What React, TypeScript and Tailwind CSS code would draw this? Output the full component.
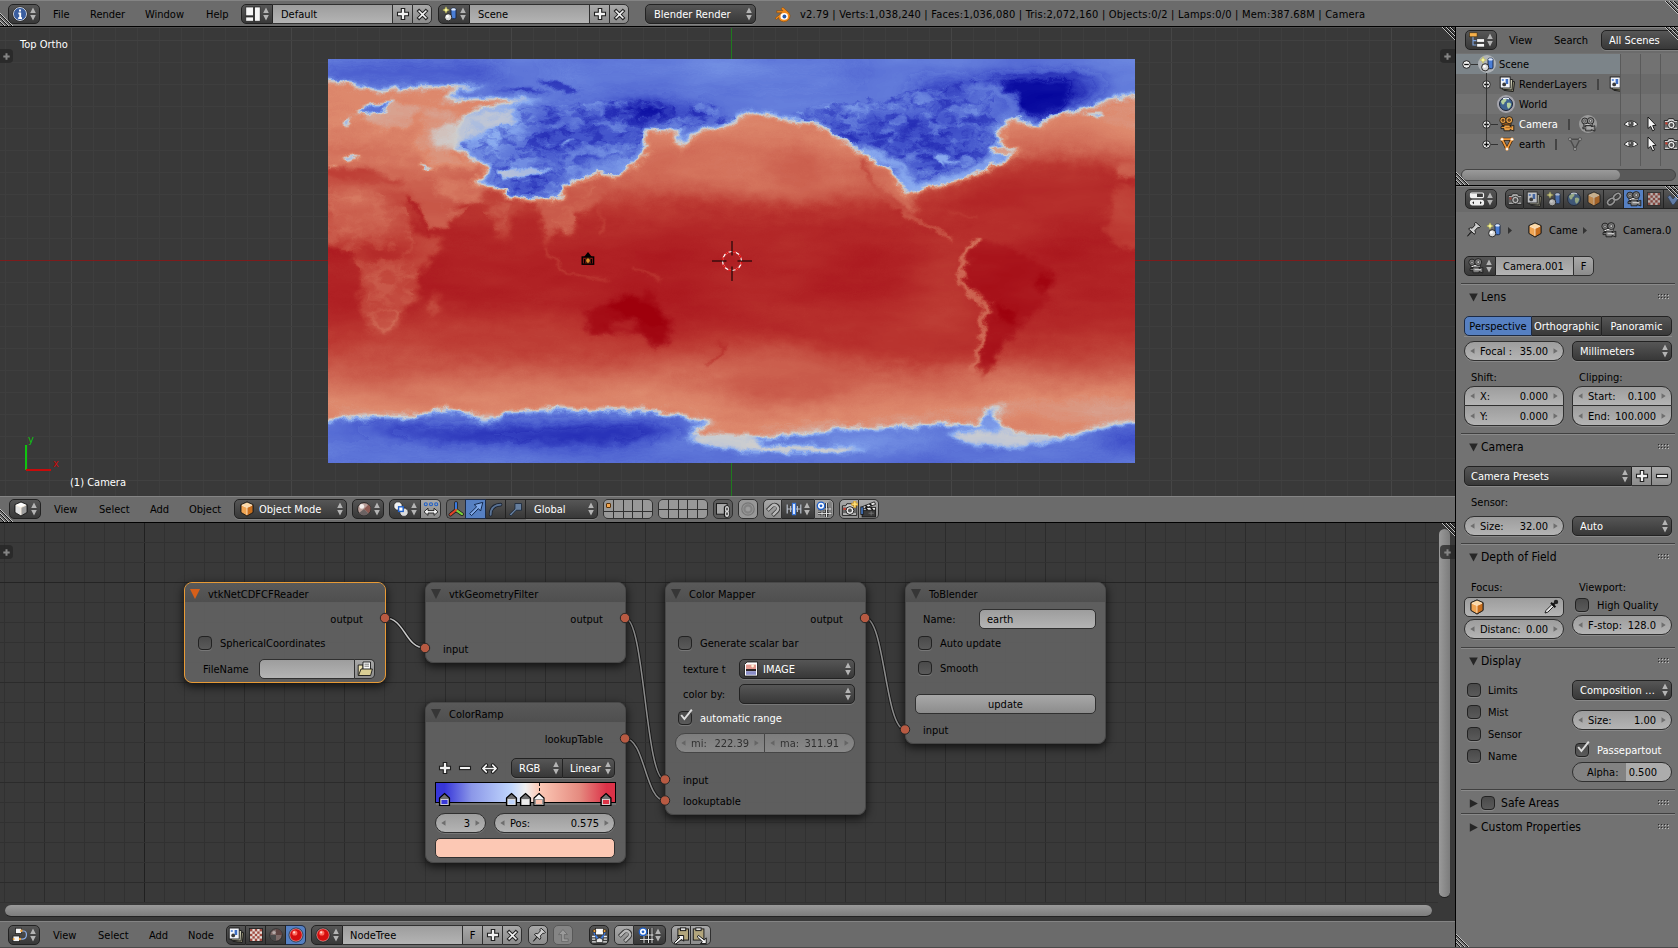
import React from "react";

const DARK = "bg-linear-to-b from-[#565656] to-[#383838] border-[#222]";
const LIGHT = "bg-linear-to-b from-[#9d9d9d] to-[#b4b4b4] border-[#303030]";
const TOOL = "bg-linear-to-b from-[#a8a8a8] to-[#8c8c8c] border-[#303030]";
const EMBOSS = "shadow-[0_1px_0_rgba(255,255,255,0.16)]";

/* ---------- icons, all on a 16x16 canvas ---------- */

const Cube = ({ a, b, c }: { a: string; b: string; c: string }) => (
  <g stroke="#1d1d1d" strokeWidth="0.9" strokeLinejoin="round">
    <path d="M8 1 L14 3.6 V11.4 L8 15 L2 11.4 V3.6Z" fill={b} />
    <path d="M2 3.6 L8 6.2 V15 L2 11.4Z" fill={b} stroke="none" />
    <path d="M14 3.6 L8 6.2 V15 L14 11.4Z" fill={c} stroke="none" />
    <path d="M8 1 L14 3.6 L8 6.2 L2 3.6Z" fill={a} stroke="none" />
    <path d="M8 1 L14 3.6 V11.4 L8 15 L2 11.4 V3.6Z" fill="none" />
    <path d="M3 4.3 L8 6.5 L13 4.3 M8 6.5 V13.8" fill="none" stroke="#fff3e0" strokeWidth="0.8" />
  </g>
);

const MovieCam = ({ f, d }: { f: string; d: string }) => (
  <g stroke="#1d1d1d" strokeWidth="0.9" strokeLinejoin="round">
    <rect x="3" y="6.5" width="9" height="3" fill={d} />
    <circle cx="4" cy="4.3" r="3.2" fill={f} />
    <circle cx="10.2" cy="4.1" r="3.5" fill={f} />
    <circle cx="4" cy="4.3" r="1.1" fill={d} strokeWidth="0.6" />
    <circle cx="10.2" cy="4.1" r="1.3" fill={d} strokeWidth="0.6" />
    <path d="M5 9 H11 V10.5 L14.8 9.3 V15 L11 13.6 V14.8 H5 V12.6 H2 V10.6 H5Z" fill={f} />
    <path d="M6.5 11.7 H13" stroke={d} fill="none" />
  </g>
);

const SceneShapes = () => (
  <g>
    <rect x="9" y="2.2" width="5" height="10.5" rx="1.5" fill="#4a7ed6" stroke="#14233f" strokeWidth="0.9" />
    <ellipse cx="11.5" cy="3.4" rx="2.3" ry="1.2" fill="#dfeaff" />
    <circle cx="6.2" cy="11.3" r="3.6" fill="#d8d8d8" stroke="#1a1a1a" strokeWidth="0.9" />
    <circle cx="5.4" cy="10.4" r="1.4" fill="#fff" />
    <path d="M4 0.8 L5 3 L7.2 4 L5 5 L4 7.2 L3 5 L0.8 4 L3 3Z" fill="#f7f49a" stroke="#b5b04a" strokeWidth="0.5" />
  </g>
);

const PhotoCam = () => (
  <g strokeLinejoin="round">
    <path d="M1.3 4.5 H4.5 L5.5 2.6 H10.5 L11.5 4.5 H14.8 V13.5 H1.3Z" fill="#cfcfcf" stroke="#1a1a1a" strokeWidth="0.9" />
    <rect x="1.8" y="6" width="12.5" height="5.6" fill="#6a6a6a" />
    <circle cx="8.4" cy="9" r="3.7" fill="#f0f0f0" stroke="#1a1a1a" strokeWidth="0.9" />
    <circle cx="8.4" cy="9" r="1.9" fill="#555" />
    <rect x="2.4" y="6.4" width="2" height="2" fill="#d03a2a" />
  </g>
);

const Globe = () => (
  <g>
    <circle cx="8" cy="8" r="6.5" fill="#3f628f" stroke="#1b2436" strokeWidth="1" />
    <path d="M3 5 Q6 2 8.5 3 Q9 5 6.5 6.5 Q6.5 9 4.5 8.5 Q3 7.5 3 5Z M9 7 Q12 5.5 13.3 8 Q12.5 12 10 12.8 Q8.3 10 9 7Z" fill="#b5cf9c" />
    <path d="M5 2.8 Q8 1.4 11 2.9" stroke="#eef4ff" strokeWidth="1.2" fill="none" />
  </g>
);

const Layers = () => (
  <g stroke="#1a1a1a" strokeWidth="0.9">
    <rect x="5.5" y="5" width="9.5" height="10" fill="#8d8a70" transform="rotate(8 10 10)" />
    <rect x="3.6" y="3.2" width="9.8" height="10.4" fill="#c9c9b0" transform="rotate(4 8 8)" />
    <rect x="1.2" y="1" width="10" height="11" fill="#f2f5fb" />
    <rect x="6.6" y="3" width="2.6" height="5" fill="#3f6fc4" stroke="none" />
    <circle cx="5.2" cy="8.4" r="1.9" fill="#3a3a3a" stroke="none" />
    <rect x="2.8" y="3" width="2" height="2" fill="#6a93dc" stroke="none" />
  </g>
);

const Checker = ({ a }: { a: string }) => (
  <g>
    <rect x="1.5" y="1.5" width="13" height="13" fill="#e6dcd8" stroke="#222" strokeWidth="0.9" />
    {[0, 1, 2, 3, 4].map((r) =>
      [0, 1, 2, 3, 4].map((c) =>
        (r + c) % 2 === 0 ? <rect key={r * 5 + c} x={2 + c * 2.4} y={2 + r * 2.4} width="2.4" height="2.4" fill={a} /> : null
      )
    )}
  </g>
);

const Magnet = () => (
  <g fill="none" strokeLinecap="butt">
    <path d="M2.5 9 L7.5 4 A3.9 3.9 0 0 1 13 9.6 L8 14.4" stroke="#333" strokeWidth="4.2" />
    <path d="M3 8.6 L7.6 4.1 A3.8 3.8 0 0 1 12.9 9.5 L8.4 14" stroke="#b9b9b9" strokeWidth="2.6" />
  </g>
);

const Clip = () => (
  <g stroke="#1a1a1a" strokeWidth="0.9">
    <rect x="4.6" y="1.8" width="10" height="10.5" fill="#b3a67c" />
    <rect x="7" y="0.8" width="5" height="2.6" fill="#e0e0e0" />
  </g>
);

const Plus = () => (
  <path d="M6.3 2.5 H9.7 V6.3 H13.5 V9.7 H9.7 V13.5 H6.3 V9.7 H2.5 V6.3 H6.3Z" fill="#f2f2f2" stroke="#1e1e1e" strokeWidth="1.1" />
);

const ICONS: Record<string, React.ReactNode> = {
  info: (
    <g>
      <circle cx="8" cy="8" r="6.6" fill="#3a5e9f" stroke="#e6ebf5" strokeWidth="1" />
      <circle cx="8" cy="8" r="7.2" fill="none" stroke="#1a1a1a" strokeWidth="0.5" />
      <path d="M8 3.4 v2.2 M6.4 7.4 H8.2 V12 M6.2 12.1 H10" stroke="#fff" strokeWidth="1.9" fill="none" />
    </g>
  ),
  layout: (
    <g fill="#f6f6f6" stroke="#1c1c1c" strokeWidth="0.7">
      <rect x="0.8" y="1" width="7.6" height="8.8" />
      <rect x="0.8" y="11" width="7.6" height="4.2" />
      <rect x="9.6" y="1" width="5.6" height="14.2" />
    </g>
  ),
  scene: <SceneShapes />,
  outliner: (
    <g>
      <path d="M4 4 V13 H8 M4 8.6 H8" stroke="#7fa3dd" strokeWidth="1.1" fill="none" />
      <rect x="0.5" y="0.8" width="7.6" height="4" fill="#f6b04a" stroke="#3a2a10" strokeWidth="0.6" />
      <rect x="7.8" y="6.8" width="7.6" height="3.4" fill="#f8f8f8" stroke="#222" strokeWidth="0.6" />
      <rect x="7.8" y="11.6" width="7.6" height="3.4" fill="#f8f8f8" stroke="#222" strokeWidth="0.6" />
    </g>
  ),
  props: (
    <g stroke="#f0f0f0" strokeWidth="1.2">
      <rect x="1.5" y="2" width="13" height="4.6" rx="1.2" fill="#3a3a3a" />
      <rect x="2" y="2.5" width="6" height="3.6" fill="#f0f0f0" stroke="none" />
      <rect x="1.5" y="9.4" width="13" height="4.6" rx="2" fill="#f0f0f0" />
      <path d="M5 10.2 L3.2 11.7 L5 13.2Z M11 10.2 L12.8 11.7 L11 13.2Z" fill="#222" stroke="none" />
    </g>
  ),
  layers: <Layers />,
  globe: <Globe />,
  camOrange: <MovieCam f="#eda245" d="#9c5a17" />,
  camGrey: <MovieCam f="#8f8f8f" d="#d0d0d0" />,
  camDark: <MovieCam f="#7a7a7a" d="#e8e8e8" />,
  mesh: (
    <g>
      <path d="M3 3.2 H13 L8 13Z" fill="none" stroke="#3a2208" strokeWidth="3" strokeLinejoin="round" />
      <path d="M3 3.2 H13 L8 13Z" fill="none" stroke="#f39a3c" strokeWidth="1.7" strokeLinejoin="round" />
      <g fill="#fff" stroke="#f39a3c" strokeWidth="0.5"><circle cx="3" cy="3.2" r="1.5" /><circle cx="13" cy="3.2" r="1.5" /><circle cx="8" cy="13" r="1.5" /></g>
    </g>
  ),
  meshGrey: (
    <g>
      <path d="M3 3.2 H13 L8 13Z" fill="none" stroke="#4a4a4a" strokeWidth="1.4" />
      <g fill="#9a9a9a" stroke="#4a4a4a" strokeWidth="0.8"><circle cx="3" cy="3.2" r="1.6" /><circle cx="13" cy="3.2" r="1.6" /><circle cx="8" cy="13" r="1.6" /></g>
    </g>
  ),
  eye: (
    <g>
      <path d="M1 8.3 Q8 1.2 15 8.3 Q8 13.4 1 8.3Z" fill="#f6f6f6" stroke="#222" strokeWidth="0.9" />
      <circle cx="8" cy="7.8" r="2.7" fill="#4c4c4c" />
      <circle cx="7.2" cy="7" r="0.8" fill="#ddd" />
    </g>
  ),
  cursor: <path d="M5 1 L5 12.5 L7.6 10.3 L9.6 14.8 L11.6 13.9 L9.7 9.6 L13 9.3Z" fill="#f4f4f4" stroke="#1a1a1a" strokeWidth="1" />,
  photo: <PhotoCam />,
  photoPlus: (
    <g>
      <PhotoCam />
      <path d="M12 0 h2 v2 h2 v2 h-2 v2 h-2 v-2 h-2 v-2 h2Z" fill="#ffe27a" stroke="#c98c10" strokeWidth="0.6" />
    </g>
  ),
  clapper: (
    <g stroke="#111" strokeWidth="0.8">
      <rect x="2" y="8" width="12.5" height="7" fill="#3a3a3a" />
      <rect x="2" y="6" width="12.5" height="2.6" fill="#f0f0f0" />
      <path d="M2 5.4 L13.6 0.8 L14.6 3.2 L3 7.4Z" fill="#f0f0f0" />
      <path d="M5 4.2 L7 5.8 M9 2.7 L11 4.3 M5 6 L7 8.5 M10 6 L12 8.5" stroke="#111" strokeWidth="1.5" />
      <rect x="0.8" y="5.6" width="2.2" height="7" fill="#4b83d8" />
      <path d="M8 11.5 h5 M10.5 9.6 v4" stroke="#777" />
    </g>
  ),
  cube: <Cube a="#fbd9a8" b="#f0a553" c="#c96f1d" />,
  cubeWhite: <Cube a="#ffffff" b="#e2e2e2" c="#9c9c9c" />,
  link: (
    <g fill="none" strokeLinecap="round">
      <g stroke="#2a2a2a" strokeWidth="3.2"><ellipse cx="5" cy="10.6" rx="3.8" ry="2.6" transform="rotate(-40 5 10.6)" /><ellipse cx="11" cy="5.6" rx="3.8" ry="2.6" transform="rotate(-40 11 5.6)" /></g>
      <g stroke="#b8b8b8" strokeWidth="1.6"><ellipse cx="5" cy="10.6" rx="3.8" ry="2.6" transform="rotate(-40 5 10.6)" /><ellipse cx="11" cy="5.6" rx="3.8" ry="2.6" transform="rotate(-40 11 5.6)" /></g>
    </g>
  ),
  checker: <Checker a="#a0483e" />,
  wrench: <path d="M1.5 6 L4 4 L7 8 L13 1.6 L15.4 3.4 L8 13.6 Q6.8 14.6 5.8 13Z" fill="#6f93cf" stroke="#24395c" strokeWidth="0.8" />,
  pin: (
    <g transform="rotate(42 8 8)" stroke="#1a1a1a" strokeWidth="0.9">
      <path d="M7.6 10 L8 16.2 L8.4 10Z" fill="#eee" />
      <path d="M4 10.2 Q4 7.6 6.2 7.2 V3.2 L4.8 2 V0.4 H11.2 V2 L9.8 3.2 V7.2 Q12 7.6 12 10.2Z" fill="#cfcfcf" />
    </g>
  ),
  dropper: (
    <g>
      <path d="M2 14 L3 11.4 L9 5.4 L10.8 7.2 L4.8 13.2Z" fill="#e8e8e8" stroke="#111" strokeWidth="0.9" />
      <path d="M8 3.8 L12.4 8.2 M10.2 5.8 L12.8 3" stroke="#111" strokeWidth="2" />
      <circle cx="13" cy="2.9" r="2.2" fill="#222" />
    </g>
  ),
  folder: (
    <g stroke="#1a1a1a" strokeWidth="0.9" strokeLinejoin="round">
      <path d="M1.2 4 H6 V14.5 H1.2Z" fill="#eadfae" />
      <rect x="6" y="1" width="7.5" height="8" fill="#fafafa" />
      <path d="M7.5 3.2 H12 M7.5 5.2 H12" stroke="#555" strokeWidth="0.8" />
      <path d="M1.5 14.5 L4 8 H15.4 L13.6 14.5Z" fill="#d9ce94" />
    </g>
  ),
  image: (
    <g>
      <path d="M4 1 H14.5 V15 H1.5 V3.5Z" fill="#fff" stroke="#111" strokeWidth="0.8" />
      <rect x="3" y="3.6" width="10" height="5" fill="#e39a90" />
      <rect x="3" y="8" width="10" height="2.2" fill="#2b2222" />
      <rect x="3" y="10.2" width="10" height="3.6" fill="#8b8fc9" />
      <circle cx="9.6" cy="5" r="1.4" fill="#fff2d8" />
    </g>
  ),
  ballRed: (
    <g>
      <circle cx="8" cy="8" r="6.4" fill="#d40f0f" stroke="#f0d0d0" strokeWidth="0.8" />
      <circle cx="8" cy="8" r="7" fill="none" stroke="#1a1a1a" strokeWidth="0.7" />
      <circle cx="6.8" cy="6" r="2.6" fill="#ff6a5c" />
      <circle cx="6.2" cy="5.4" r="1.1" fill="#ffd8d0" />
    </g>
  ),
  ballMix: (
    <g>
      <circle cx="8" cy="8" r="6.4" fill="#b9a09a" stroke="#1a1a1a" strokeWidth="0.9" />
      <path d="M8 8 L12.6 3.4 A6.2 6.2 0 0 1 12.6 12.4Z" fill="#8d5a52" />
      <path d="M8 8 L12.6 12.4 A6.2 6.2 0 0 1 3 12Z" fill="#6b6262" />
      <circle cx="5.8" cy="5.4" r="2.4" fill="#f4eeec" />
    </g>
  ),
  ballDark: (
    <g>
      <circle cx="8" cy="8" r="6.2" fill="#7d6a68" stroke="#222" strokeWidth="0.8" />
      <path d="M8 8 V2 A6 6 0 0 1 14 8Z" fill="#5f4543" />
      <path d="M8 8 V14 A6 6 0 0 1 2 8Z" fill="#4b4b4b" />
      <circle cx="6" cy="5.6" r="1.7" fill="#b5aaa8" />
    </g>
  ),
  pivot: (
    <g stroke="#222" strokeWidth="0.8">
      <circle cx="5" cy="5" r="4.2" fill="#f0f0f0" />
      <circle cx="11" cy="11.2" r="4.2" fill="#dcdcdc" />
      <rect x="5.6" y="5.8" width="4.6" height="4.6" fill="#fff" stroke="#1f5fc8" strokeWidth="1.4" />
    </g>
  ),
  centers: (
    <g>
      <g fill="none" stroke="#2060c8" strokeWidth="1.1"><circle cx="2.8" cy="3.2" r="1.5" /><circle cx="8" cy="3.2" r="1.5" /><circle cx="13.2" cy="3.2" r="1.5" /></g>
      <path d="M1 10.8 L5 7.2 V9.6 H11 V7.2 L15 10.8 L11 14.4 V12 H5 V14.4Z" fill="#f2f2f2" stroke="#1a1a1a" strokeWidth="0.9" />
    </g>
  ),
  axes: (
    <g fill="none" strokeLinecap="round">
      <g stroke="#1a1a1a" strokeWidth="3.6"><path d="M8 9 V2 M8 9 L2.4 13.6 M8 9 L14 13.2" /></g>
      <path d="M8 9 V2" stroke="#3b7be0" strokeWidth="2.2" />
      <path d="M8 9 L14 13.2" stroke="#7bd23a" strokeWidth="2.2" />
      <path d="M8 9 L2.4 13.6" stroke="#e0442a" strokeWidth="2.2" />
    </g>
  ),
  arrow: <path d="M1.6 12.6 L8.6 5.8 L6.2 3.6 L14.8 1.4 L12.6 10 L10.4 7.6 L3.6 14.6Z" fill="#7ea8e8" stroke="#13294f" strokeWidth="1" />,
  arc: (
    <g fill="none" strokeLinecap="round">
      <path d="M2.8 13.6 Q2.6 3.6 13.4 2.8" stroke="#1a2230" strokeWidth="3.8" />
      <path d="M2.8 13.6 Q2.6 3.6 13.4 2.8" stroke="#5b7496" strokeWidth="2" />
    </g>
  ),
  scaleTool: <path d="M1.4 13.2 L7.4 7.4 V1.6 H14.4 V8.8 H8.8 L3.2 14.8Z" fill="#667f9f" stroke="#1b2738" strokeWidth="0.9" />,
  lockLayers: (
    <g>
      <rect x="1.4" y="2.4" width="10" height="10" fill="#a8a8a8" stroke="#1a1a1a" strokeWidth="0.9" />
      <g fill="none"><path d="M11 6.6 v3 M11 10 v3" stroke="#1a1a1a" strokeWidth="5.4" strokeLinecap="round" /><path d="M11.3 6.6 v2.4 M11.3 10.8 v2.4" stroke="#dcdcdc" strokeWidth="3.6" strokeLinecap="round" /><path d="M11.3 6.8 v1.4 M11.3 11.2 v1.6" stroke="#333" strokeWidth="1.4" strokeLinecap="round" /></g>
    </g>
  ),
  prop: (
    <g fill="none">
      <circle cx="8" cy="8" r="6.2" stroke="#777" strokeWidth="1.2" />
      <circle cx="8" cy="8" r="3.6" stroke="#828282" strokeWidth="2.2" />
      <circle cx="8" cy="8" r="1.8" fill="#9d9d9d" />
    </g>
  ),
  magnet: <Magnet />,
  increments: (
    <g>
      <path d="M0.8 8 H15.2 M1.2 3.6 V12.4 M4.6 5 V11 M11.4 5 V11 M14.8 3.6 V12.4" stroke="#b9c0cc" strokeWidth="1.2" />
      <rect x="6.5" y="2.4" width="3" height="11.2" fill="#e6efff" stroke="#3b78dd" strokeWidth="1.2" />
    </g>
  ),
  gridDot: (
    <g>
      <path d="M2 8 H15.5 M2 12.4 H15.5 M6 8 V16 M10.5 2 V16 M14 0.8 V16" stroke="#1a1a1a" strokeWidth="2.4" />
      <path d="M2 8 H15.5 M2 12.4 H15.5 M6 8 V16 M10.5 2 V16 M14 0.8 V16" stroke="#e6e6e6" strokeWidth="1" />
      <circle cx="5" cy="4.8" r="3.7" fill="#fff" stroke="#2060c8" strokeWidth="1.4" />
      <circle cx="5" cy="4.8" r="1.4" fill="#2060c8" />
    </g>
  ),
  nodeEditor: (
    <g>
      <path d="M8 4 H12 Q14.6 4.4 14.4 8 Q14.4 12.6 9 12" stroke="#8fb0e8" strokeWidth="1.2" fill="none" />
      <rect x="3.5" y="1.2" width="6" height="5.4" fill="#f4f4f4" stroke="#222" strokeWidth="0.8" />
      <rect x="1" y="9" width="6.6" height="5.6" fill="#f4f4f4" stroke="#222" strokeWidth="0.8" />
      <circle cx="9.4" cy="3.8" r="1.2" fill="#f2a33a" />
      <circle cx="8" cy="12" r="1.2" fill="#f2a33a" />
      <circle cx="1.6" cy="12" r="1" fill="#f2a33a" />
    </g>
  ),
  parent: <path d="M6 14.5 V7 H2.6 L7.4 1.6 L12.2 7 H8.8 V11.6 H13 V14.5Z" fill="#9b9b9b" stroke="#6c6c6c" strokeWidth="1" />,
  backdrop: (
    <g stroke="#111" strokeWidth="0.6">
      <path d="M1 9 h3 M12 9 h3 M1 11.4 h3 M12 11.4 h3 M1 14 h14" stroke="#e8e8e8" strokeWidth="1.3" />
      <path d="M2.6 4.6 L5.6 10 L8 12.4 L10.4 10 L13.4 4.6" stroke="#3b78dd" strokeWidth="1.8" fill="none" />
      <path d="M5 12 Q8 8.6 11 12 V14.6 H5Z" fill="#e4e4e4" />
      <rect x="4.2" y="1.2" width="7.6" height="6.2" fill="#fafafa" />
      <circle cx="3.2" cy="3.8" r="1.4" fill="#f2a33a" />
      <circle cx="12.8" cy="3.8" r="1.4" fill="#f2a33a" />
    </g>
  ),
  copyNodes: (
    <g><Clip /><path d="M1 15 L6.4 9.6 L4.6 8 H10 V13.4 L8.2 11.6 L2.6 16Z" fill="#f2f2f2" stroke="#111" strokeWidth="0.9" /></g>
  ),
  pasteNodes: (
    <g><g transform="translate(-3.4 0)"><Clip /></g><path d="M6 7.8 L11.6 12.2 L13.4 10.2 V15.6 H8 L9.8 13.8 L5 9.4Z" fill="#f2f2f2" stroke="#111" strokeWidth="0.9" /></g>
  ),
  plus: <Plus />,
  minus: <rect x="2.5" y="6.4" width="11" height="3.2" fill="#f2f2f2" stroke="#1e1e1e" strokeWidth="1.1" />,
  cross: <g transform="rotate(45 8 8)"><path d="M6.6 1.5 H9.4 V6.6 H14.5 V9.4 H9.4 V14.5 H6.6 V9.4 H1.5 V6.6 H6.6Z" fill="#f2f2f2" stroke="#1e1e1e" strokeWidth="1.1" /></g>,
  flip: (
    <g fill="none" strokeLinecap="round" strokeLinejoin="round">
      <path d="M2 8 H14 M5 4.8 L1.8 8 L5 11.2 M11 4.8 L14.2 8 L11 11.2" stroke="#1a1a1a" strokeWidth="3.4" />
      <path d="M2 8 H14 M5 4.8 L1.8 8 L5 11.2 M11 4.8 L14.2 8 L11 11.2" stroke="#f4f4f4" strokeWidth="1.6" />
    </g>
  ),
  blender: (
    <g>
      <path d="M1 11.6 L7.4 6.4 H2.6 V4.4 H8.4 L6.6 2.6 L8.4 1.2 L14 6.4 Q16 8.8 14.6 11.8 Q12.6 15 9 14.8 Q4.8 14.4 4.4 10.8 L2.4 12.6Z" fill="#f08a1c" stroke="#7a4208" strokeWidth="0.5" />
      <ellipse cx="9.6" cy="9.8" rx="3.5" ry="3.1" fill="#fff" />
      <circle cx="9.8" cy="9.9" r="1.8" fill="#2358a8" />
    </g>
  ),
};

const Icon = ({ n, s = 16, className = "" }: { n: string; s?: number; className?: string }) => (
  <svg width={s} height={s} viewBox="0 0 16 16" className={"shrink-0 " + className}>{ICONS[n]}</svg>
);

const UpDown = () => (
  <svg width="6" height="14" viewBox="0 0 6 14" className="shrink-0">
    <path d="M3 0.5 L5.8 6 H0.2Z M3 13.5 L0.2 8 H5.8Z" fill="#b4b4b4" />
  </svg>
);

/* ---------- widgets ---------- */

const IconMenu = ({ n, className = "" }: { n: string; className?: string }) => (
  <div className={`flex h-5 w-8 shrink-0 items-center justify-between rounded-[5px] border pr-[3px] pl-[3px] ${DARK} ${className}`}>
    <Icon n={n} s={16} />
    <UpDown />
  </div>
);

const Menu = ({ text, icon, className = "" }: { text: string; icon?: string; className?: string }) => (
  <div className={`flex h-5 shrink-0 items-center border pr-[3px] text-white ${DARK} ${EMBOSS} ${className}`}>
    {icon && <Icon n={icon} s={16} className="mr-[4px]" />}
    <span className="flex-1 overflow-hidden pt-[2px] leading-4 whitespace-nowrap">{text}</span>
    <UpDown />
  </div>
);

const Btn = ({ n, className = "", s = 16 }: { n: string; className?: string; s?: number }) => (
  <div className={`flex h-5 shrink-0 items-center justify-center border ${className}`}>
    <Icon n={n} s={s} />
  </div>
);

const Tri = ({ d }: { d: "l" | "r" }) => (
  <svg width="5" height="6" viewBox="0 0 5 6" className="shrink-0">
    <path d={d === "l" ? "M4.5 0.2 V5.8 L0.3 3Z" : "M0.5 0.2 V5.8 L4.7 3Z"} fill="#6e6e6e" />
  </svg>
);

const Num = ({ label, value, className = "" }: { label?: string; value: string; className?: string }) => (
  <div className={`flex h-5 items-center border px-[5px] ${LIGHT} ${className}`}>
    <Tri d="l" />
    <span className="flex flex-1 justify-between pt-[2px] pr-[5px] pl-[5px] leading-4 whitespace-nowrap">
      <span>{label}</span>
      <span>{value}</span>
    </span>
    <Tri d="r" />
  </div>
);

const Check = ({ on }: { on?: boolean }) => (
  <span className={`flex size-[14px] shrink-0 rounded-[4px] border border-[#222] bg-linear-to-b from-[#4a4a4a] to-[#5a5a5a] ${EMBOSS}`}>
    {on && (
      <svg width="16" height="14" viewBox="0 0 16 14" className="-mt-1 shrink-0 overflow-visible">
        <path d="M2.2 7 L5.4 11 L12.8 1.6" fill="none" stroke="#dcdcdc" strokeWidth="2" />
      </svg>
    )}
  </span>
);

const Hatch = ({ flip = false, className }: { flip?: boolean; className: string }) => (
  <svg width="13" height="13" viewBox="0 0 13 13" className={"absolute " + className}>
    {[0, 4, 8].map((o) => (
      <g key={o} strokeWidth="1">
        <path d={flip ? `M0 ${o + 1} L${12 - o} 13` : `M${o + 1} 0 L13 ${12 - o}`} stroke="#141414" />
        <path d={flip ? `M0 ${o} L${13 - o} 13` : `M${o} 0 L13 ${13 - o}`} stroke="#c4c4c4" />
      </g>
    ))}
  </svg>
);

const PlusTab = ({ className }: { className: string }) => (
  <div className={`absolute flex h-[14px] items-center justify-center bg-[#262626]/75 ${className}`}>
    <svg width="7" height="7" viewBox="0 0 7 7"><path d="M3.5 0.3 V6.7 M0.3 3.5 H6.7" stroke="#858585" strokeWidth="2" /></svg>
  </div>
);

const BAR = "relative flex shrink-0 items-center border-t border-[#848484] bg-[#6b6b6b] [&>span]:shrink-0 [&>span]:pt-[2px]";
const FIELD = "flex h-5 shrink-0 items-center pt-[2px]";

/* ---------- info header ---------- */

const DataBlock = ({ icon, text }: { icon: string; text: string }) => (
  <div className="flex w-[191px] shrink-0">
    <IconMenu n={icon} className="rounded-r-none" />
    <div className={`w-[119px] border-y pl-2 ${FIELD} ${LIGHT}`}>{text}</div>
    <Btn n="plus" className={`w-5 border-r-0 ${TOOL}`} />
    <Btn n="cross" className={`w-5 rounded-r-[5px] ${TOOL}`} s={15} />
  </div>
);

const InfoBar = () => (
  <header className={`${BAR} h-[26px] pt-px pl-2`}>
    <Hatch flip className="bottom-0 left-0" />
    <IconMenu n="info" />
    <span className="ml-[13px] w-[37px]">File</span>
    <span className="w-[55px]">Render</span>
    <span className="w-[61px]">Window</span>
    <span className="w-[35px]">Help</span>
    <DataBlock icon="layout" text="Default" />
    <div className="w-[6px]" />
    <DataBlock icon="scene" text="Scene" />
    <Menu text="Blender Render" className="ml-4 w-[111px] rounded-[5px] pl-2" />
    <Icon n="blender" s={17} className="ml-[18px]" />
    <span className="ml-[9px] tracking-[0.205px] whitespace-nowrap">
      v2.79 | Verts:1,038,240 | Faces:1,036,080 | Tris:2,072,160 | Objects:0/2 | Lamps:0/0 | Mem:387.68M | Camera
    </span>
    <Hatch className="top-0 right-0" />
  </header>
);

/* ---------- surface temperature map ---------- */

const NORTH =
  "M-20 -20 H1600 V105 L1558 132 L1510 145 L1480 163 L1440 180 L1402 190 L1388 205 L1372 228 L1350 212 L1335 196 L1312 206 L1297 228 L1296 262 L1300 288 L1328 302 L1300 330 L1255 362 L1220 388 L1180 402 L1150 410 L1130 430 L1112 402 L1095 355 L1060 330 L1040 300 L1018 286 L985 243 L950 220 L905 210 L862 192 L822 182 L790 205 L765 228 L722 238 L692 285 L683 258 L700 238 L655 238 L620 234 L612 268 L618 312 L596 345 L566 372 L530 364 L500 384 L462 402 L458 438 L400 446 L362 432 L336 404 L304 402 L318 368 L330 345 L298 328 L264 292 L262 236 L292 190 L372 160 L432 152 L395 148 L320 142 L250 148 L262 122 L318 112 L250 104 L180 110 L118 118 L72 108 L58 92 L-20 84Z";
const SOUTH =
  "M-20 1118 L80 1106 L180 1103 L240 1080 L285 1092 L313 1128 L350 1095 L440 1080 L510 1086 L620 1086 L690 1104 L742 1116 L708 1142 L722 1162 L800 1168 L930 1158 L1000 1140 L1120 1135 L1200 1124 L1262 1136 L1276 1090 L1308 1062 L1286 1092 L1298 1140 L1376 1168 L1440 1160 L1500 1132 L1600 1110 V1280 H-20Z";
const COLD_LAND =
  "M380 175 L560 150 L770 165 L800 215 L620 240 L590 350 L460 440 L340 430 L330 330 L270 290 L290 210Z M900 190 L1060 140 L1290 80 L1290 320 L1130 400 L1030 290Z";

const g = (t: number) => {
  const v = Math.round(t * 255);
  return `rgb(${v},${v},${v})`;
};

const BASE: [number, number][] = [
  [0, 0.6], [0.15, 0.61], [0.25, 0.645], [0.31, 0.7], [0.37, 0.81], [0.42, 0.87], [0.5, 0.885], [0.6, 0.88], [0.67, 0.84], [0.73, 0.76], [0.79, 0.67], [0.84, 0.62], [0.9, 0.6], [1, 0.58],
];

const WorldMap = () => (
  <svg width="807" height="404" viewBox="15 27 1543 1212" preserveAspectRatio="none" className="absolute top-[32px] left-[328px]">
    <defs>
      <linearGradient id="base" x1="0" y1="0" x2="0" y2="1">
        {BASE.map(([o, v]) => <stop key={o} offset={o} stopColor={g(v)} />)}
      </linearGradient>
      <filter id="tempMap" filterUnits="userSpaceOnUse" x="-40" y="-30" width="1660" height="1330" colorInterpolationFilters="sRGB">
        <feTurbulence type="fractalNoise" baseFrequency="0.04 0.034" numOctaves="4" seed="7" result="n" />
        <feColorMatrix in="n" type="matrix" values="1 0 0 0 0  0 1 0 0 0  0 0 1 0 0  0 0 0 0 1" result="no" />
        <feDisplacementMap in="SourceGraphic" in2="no" scale="26" xChannelSelector="R" yChannelSelector="G" result="d" />
        <feTurbulence type="fractalNoise" baseFrequency="0.004 0.008" numOctaves="4" seed="21" result="w" />
        <feColorMatrix in="w" type="matrix" values="1 0 0 0 0  1 0 0 0 0  1 0 0 0 0  0 0 0 0 1" result="wo" />
        <feComposite in="d" in2="wo" operator="arithmetic" k1="0" k2="1" k3="0.11" k4="-0.055" result="m" />
        <feComponentTransfer in="m">
          <feFuncR type="table" tableValues="0 0.14 0.27 0.39 0.54 0.81 0.87 0.80 0.74 0.68 0.62" />
          <feFuncG type="table" tableValues="0 0.17 0.34 0.49 0.67 0.81 0.54 0.38 0.23 0.11 0" />
          <feFuncB type="table" tableValues="0.6 0.71 0.80 0.86 0.94 0.81 0.43 0.31 0.20 0.13 0.05" />
        </feComponentTransfer>
      </filter>
      <filter id="rough" filterUnits="userSpaceOnUse" x="-40" y="-30" width="1660" height="1330" colorInterpolationFilters="sRGB">
        <feTurbulence type="fractalNoise" baseFrequency="0.035 0.04" numOctaves="6" seed="4" />
        <feColorMatrix type="matrix" values="0 0 0 0 0.02  0 0 0 0 0.02  0 0 0 0 0.02  4 0 0 0 -1.75" result="c" />
        <feComposite in="c" in2="SourceGraphic" operator="in" />
      </filter>
      <filter id="frost" filterUnits="userSpaceOnUse" x="-40" y="-30" width="1660" height="1330" colorInterpolationFilters="sRGB">
        <feTurbulence type="fractalNoise" baseFrequency="0.02 0.025" numOctaves="6" seed="33" />
        <feColorMatrix type="matrix" values="0 0 0 0 0.45  0 0 0 0 0.45  0 0 0 0 0.45  0 5 0 0 -2.5" result="c" />
        <feComposite in="c" in2="SourceGraphic" operator="in" />
      </filter>
      <filter id="landTex" filterUnits="userSpaceOnUse" x="-40" y="-30" width="1660" height="1330" colorInterpolationFilters="sRGB">
        <feTurbulence type="fractalNoise" baseFrequency="0.03 0.03" numOctaves="6" seed="12" />
        <feColorMatrix type="matrix" values="0 0 0 0 0.58  0 0 0 0 0.58  0 0 0 0 0.58  0 4 0 0 -1.8" result="c" />
        <feComposite in="c" in2="SourceGraphic" operator="in" />
      </filter>
      <filter id="b3" x="-20%" y="-20%" width="140%" height="140%"><feGaussianBlur stdDeviation="3" /></filter>
      <filter id="b7" x="-20%" y="-20%" width="140%" height="140%"><feGaussianBlur stdDeviation="6 7" /></filter>
      <filter id="b20" x="-50%" y="-50%" width="200%" height="200%"><feGaussianBlur stdDeviation="20" /></filter>
      <filter id="b50" x="-50%" y="-50%" width="200%" height="200%"><feGaussianBlur stdDeviation="45 30" /></filter>
      <clipPath id="northClip"><path d={NORTH} /></clipPath>
    </defs>
    <g filter="url(#tempMap)">
      <rect x="-40" y="27" width="1660" height="1212" fill="url(#base)" />
      <rect x="-40" y="-30" width="1660" height="60" fill={g(0.6)} />
      <rect x="-40" y="1230" width="1660" height="70" fill={g(0.58)} />
      {/* ocean warmth */}
      <g filter="url(#b50)">
        <ellipse cx="1420" cy="430" rx="200" ry="110" fill={g(0.86)} />
        <ellipse cx="900" cy="980" rx="130" ry="90" fill={g(0.72)} />
        <ellipse cx="400" cy="860" rx="220" ry="40" fill={g(0.79)} />
        <ellipse cx="1120" cy="850" rx="180" ry="90" fill={g(0.85)} />
        <ellipse cx="880" cy="370" rx="120" ry="80" fill={g(0.66)} />
        <ellipse cx="660" cy="350" rx="90" ry="60" fill={g(0.64)} />
        <ellipse cx="1450" cy="1080" rx="200" ry="40" fill={g(0.57)} />
        <ellipse cx="1200" cy="720" rx="60" ry="160" fill={g(0.8)} />
      </g>
      <path d="M930 280 Q970 340 970 440 Q900 460 860 370 Q830 350 850 330 Q910 310 930 280Z" fill={g(0.7)} filter="url(#b20)" />
      {/* Africa, Arabia, India, Indochina */}
      <g filter="url(#b7)">
        <path d="M0 385 L60 390 L130 415 L160 440 L182 560 L236 558 L225 600 L185 680 L188 740 L160 780 L150 830 L122 860 L98 850 L75 760 L82 680 L60 600 L0 590Z" fill={g(0.76)} />
        <path d="M172 385 L210 385 L270 485 L240 530 L208 548 L184 480Z" fill={g(0.71)} />
        <path d="M300 440 L350 430 L388 455 L360 520 L355 580 L340 540 L322 470Z" fill={g(0.76)} />
        <path d="M400 440 L540 390 L538 440 L490 500 L480 560 L445 530 L436 600 L425 500Z" fill={g(0.71)} />
        <path d="M222 380 L320 400 L310 450 L260 460 L225 430Z" fill={g(0.65)} />
        <path d="M1520 345 L1600 340 V380 L1525 382Z" fill={g(0.68)} />
        <path d="M1520 410 L1600 395 V600 L1530 595 L1500 540Z" fill={g(0.78)} />
        <path d="M228 722 L222 790 L208 800 L206 756Z" fill={g(0.76)} />
      </g>
      <g filter="url(#b20)">
        <path d="M20 410 L110 420 L150 500 L130 560 L20 560Z" fill={g(0.68)} />
        <path d="M60 590 H170 L160 640 H80Z" fill={g(0.85)} />
      </g>
      <path d="M164 440 L182 470 L208 550 L268 532" fill="none" stroke={g(0.88)} strokeWidth="8" filter="url(#b3)" />
      <path d="M98 790 Q124 770 148 790 Q140 830 118 846 Q104 830 98 790Z" fill="none" stroke={g(0.7)} strokeWidth="6" filter="url(#b3)" />
      {/* Mediterranean and Europe */}
      <g filter="url(#b7)">
        <path d="M0 352 L90 356 L130 385 L150 390 L155 415 L60 392 L0 380Z" fill={g(0.78)} />
        <path d="M200 170 L262 190 L240 260 L262 320 L320 350 L220 350 L170 290 L190 230Z" fill={g(0.58)} />
        <path d="M70 190 L130 155 L190 170 L170 230 L110 240Z" fill={g(0.56)} />
        <path d="M0 290 L60 280 L200 300 L180 340 L0 335Z" fill={g(0.65)} />
      </g>
      <path d="M0 400 L160 440 L190 700 L120 860 L80 700 L60 600 L0 590Z M200 390 L330 400 L370 440 L345 560 L300 450 L250 520Z M400 430 L540 380 L470 550Z M20 180 L200 180 L250 340 L200 350 L20 330Z" filter="url(#landTex)" opacity="0.22" />
      <path d="M45 320 L75 313 L72 324 L50 334Z M190 340 L222 350 L200 356Z M15 345 L25 343 V350Z" fill={g(0.44)} filter="url(#b3)" />
      {/* Australia */}
      <g filter="url(#b7)">
        <path d="M506 790 L545 762 L585 728 L618 742 L628 706 L645 762 L672 818 L665 880 L640 890 L612 850 L560 845 L515 862Z" fill={g(0.94)} />
        <path d="M545 775 L590 740 L640 775 L660 830 L620 815 L590 790Z" fill={g(1)} />
        <path d="M555 815 L605 808 L605 845 L560 838Z" fill={g(0.85)} />
      </g>
      {/* Americas */}
      <g filter="url(#b7)">
        <path d="M1250 568 L1320 590 L1408 670 L1385 760 L1340 830 L1300 900 L1265 990 L1262 900 L1275 760 L1225 690Z" fill={g(0.92)} />
        <path d="M1380 665 L1405 680 L1385 740 L1368 700Z M1290 760 L1330 780 L1330 830 L1295 800Z" fill={g(0.99)} />
      </g>
      <path d="M1258 566 L1232 610 L1222 690 L1248 735 L1272 765 L1264 880 L1248 970" fill="none" stroke={g(0.68)} strokeWidth="11" filter="url(#b3)" />
      <path d="M1036 330 L1056 400 L1090 460 L1132 510 L1170 530 L1210 572" fill="none" stroke={g(0.74)} strokeWidth="9" filter="url(#b3)" />
      <path d="M1040 320 L1110 390 L1142 470 L1128 500 L1080 420Z" fill={g(0.66)} filter="url(#b7)" />
      <g fill="none" stroke={g(0.79)} strokeWidth="5" filter="url(#b3)">
        <path d="M428 596 L470 670 L550 690 M535 470 L540 560 M598 655 L640 675 L652 698 M1200 480 L1255 505" />
        <path d="M780 885 L740 945 M762 870 L778 905" stroke={g(0.84)} />
      </g>
      {/* cold north */}
      <path d={NORTH} fill={g(0.56)} stroke={g(0.55)} strokeWidth="18" filter="url(#b7)" />
      <path d={NORTH} fill={g(0.29)} filter="url(#b7)" />
      <g clipPath="url(#northClip)">
        <g filter="url(#b20)">
          <rect x="0" y="48" width="330" height="38" fill={g(0.19)} />
          <rect x="450" y="27" width="560" height="70" fill={g(0.31)} />
          <path d="M265 200 L390 165 L385 240 L330 300 L260 290Z" fill={g(0.43)} />
          <path d="M400 200 L560 160 L650 150 L760 190 L620 230 L600 320 L500 340 L420 320Z" fill={g(0.2)} />
          <path d="M560 165 L650 145 L680 200 L600 230Z" fill={g(0.08)} />
          <path d="M340 385 L460 370 L450 430 L380 440Z" fill={g(0.16)} />
          <path d="M940 190 L1050 190 L1240 180 L1280 250 L1250 330 L1150 370 L1060 290Z" fill={g(0.2)} />
          <path d="M960 205 L1040 215 L1060 260 L1010 260Z" fill={g(0.08)} />
          <path d="M1140 90 L1240 85 L1250 130 L1200 170 L1140 150Z" fill={g(0.15)} />
        </g>
        <path d={COLD_LAND} filter="url(#rough)" opacity="0.4" />
        <path d={COLD_LAND} filter="url(#frost)" opacity="0.42" />
        <path d="M1240 85 L1440 70 L1500 90 L1450 160 L1385 215 L1350 200 L1320 130Z" fill={g(0.1)} filter="url(#b20)" />
        <path d="M1300 95 L1440 88 L1430 150 L1380 205 L1345 190Z" fill={g(0.03)} filter="url(#b7)" />
        <path d="M415 90 L460 95 L500 125 L470 132 L440 112Z M330 120 L400 112 L440 128Z M1270 76 L1440 70 L1480 80 L1400 84Z" fill={g(0.14)} filter="url(#b3)" />
        <path d="M1230 115 Q1280 105 1318 140 Q1335 190 1310 210 L1290 250" fill="none" stroke={g(0.32)} strokeWidth="16" filter="url(#b7)" />
        <path d="M340 372 Q370 347 410 352 L450 364 Q400 374 350 387Z" fill={g(0.46)} filter="url(#b3)" />
        <path d="M1170 320 L1200 318 L1230 345 L1195 335 L1190 355Z M455 290 L485 262 L478 282Z" fill={g(0.42)} filter="url(#b3)" />
        <path d="M470 360 L560 330 L610 300 L600 380 L480 400Z" fill={g(0.34)} filter="url(#b20)" />
        <path d="M1030 290 L1110 350 L1130 420 L1220 380 L1300 320" fill="none" stroke={g(0.4)} strokeWidth="18" filter="url(#b7)" />
      </g>
      {/* cool patches amid warm regions */}
      <g filter="url(#b3)">
        <path d="M72 190 L100 162 L140 158 L120 182 L88 196Z" fill={g(0.28)} stroke={g(0.5)} strokeWidth="4" />
        <path d="M46 215 L60 205 L58 228 L48 232Z M1460 190 L1495 190 L1490 205Z" fill={g(0.44)} />
        <path d="M1276 295 L1310 290 L1330 310 L1290 316Z" fill={g(0.55)} />
      </g>
      <path d="M290 192 L372 168 L372 225 L300 250 L262 300 L215 290 L210 245Z" fill={g(0.5)} opacity="0.85" filter="url(#b7)" />
      {/* Antarctica */}
      <path d={SOUTH} fill={g(0.56)} stroke={g(0.55)} strokeWidth="16" filter="url(#b7)" />
      <path d={SOUTH} fill={g(0.28)} filter="url(#b7)" />
      <g filter="url(#b20)">
        <path d="M40 1135 L290 1130 L620 1110 L690 1150 L560 1190 L220 1180Z" fill={g(0.11)} />
        <path d="M0 1212 H1600 V1260 H0Z" fill={g(0.27)} />
        <path d="M1500 1150 L1600 1140 V1200 L1500 1190Z" fill={g(0.2)} />
        <path d="M860 1165 L1010 1155 L1180 1150 L1150 1190 L1060 1196Z" fill={g(0.36)} />
      </g>
      <g filter="url(#b7)">
        <path d="M705 1160 L760 1150 L830 1162 L850 1186 L1050 1192 L1000 1208 L800 1203 L712 1180Z" fill={g(0.49)} />
        <path d="M850 1192 L1030 1196 L960 1206 L850 1202Z" fill={g(0.54)} />
        <path d="M1200 1145 L1300 1140 L1390 1162 L1440 1162 L1330 1195 L1240 1185Z" fill={g(0.48)} />
        <path d="M1262 1136 L1276 1090 L1290 1100 L1296 1138Z" fill={g(0.36)} />
      </g>
    </g>
  </svg>
);

/* ---------- 3D view ---------- */

const range = (n: number) => Array.from({ length: n }, (_, i) => i);

const Viewport = () => (
  <section className="relative h-[469px] shrink-0 overflow-hidden bg-[#393939]">
    <svg width="1455" height="469" shapeRendering="crispEdges" className="absolute inset-0">
      {range(67).map((i) => (
        <rect key={i} x={5 + i * 22} y="0" width="1" height="469" fill={i % 10 === 3 ? "#464646" : "#3e3e3e"} />
      ))}
      {range(22).map((i) => (
        <rect key={i} x="0" y={13 + i * 22 - 22} width="1455" height="1" fill={i % 10 === 1 ? "#414141" : "#3e3e3e"} />
      ))}
      <rect x="0" y="233" width="1455" height="1" fill="#7d1c1c" />
      <rect x="731" y="0" width="1" height="469" fill="#1f7a1f" />
      <rect x="0" y="0" width="1455" height="1" fill="#4d4d4d" />
      <rect x="25" y="418" width="2" height="25" fill="#0fc40f" />
      <rect x="26" y="442" width="25" height="2" fill="#c80a0a" />
    </svg>
    <WorldMap />
    <svg width="60" height="60" viewBox="-30 -30 60 60" className="absolute top-[203.5px] left-[701.5px]">
      <circle r="9.5" fill="none" stroke="#fff" strokeWidth="1.2" />
      <circle r="9.5" fill="none" stroke="#e01010" strokeWidth="1.5" strokeDasharray="3.73 3.73" />
      <path d="M-20 0 H-5.5 M5.5 0 H20 M0 -20 V-5.5 M0 5.5 V20" stroke="#000" strokeWidth="1" />
    </svg>
    <svg width="16" height="16" viewBox="0 0 16 16" className="absolute top-[224px] left-[580px]">
      <path d="M8 1 L12 6 H4Z" fill="#000" />
      <rect x="2.2" y="6" width="11.4" height="7.2" fill="#7a1512" stroke="#000" strokeWidth="1.4" />
      <path d="M4.5 8 V12.5 M11.5 8 V12.5" stroke="#000" />
      <ellipse cx="8" cy="9.6" rx="2.3" ry="2.8" fill="#e08a2c" stroke="#000" strokeWidth="0.8" />
    </svg>
    <span className="absolute top-[10px] left-5 leading-4 text-white">Top Ortho</span>
    <span className="absolute top-[405px] left-[28px] leading-4 text-[#0fc40f]">y</span>
    <span className="absolute top-[429px] left-[53px] leading-4 text-[#c80a0a]">x</span>
    <span className="absolute top-[448px] left-[70px] leading-4 text-white">(1) Camera</span>
    <PlusTab className="top-[22px] left-0 w-[13px] rounded-r-[4px]" />
    <PlusTab className="top-[22px] right-0 w-[15px] rounded-l-[4px]" />
    <Hatch className="top-0 right-0" />
  </section>
);

const LayerGrid = ({ dot = false, className = "" }: { dot?: boolean; className?: string }) => (
  <div className={`grid h-5 w-[50px] shrink-0 grid-cols-5 gap-px overflow-hidden rounded-[5px] border border-[#303030] bg-[#303030] ${className}`}>
    {range(10).map((i) => (
      <div key={i} className="flex items-center justify-center bg-[#989898]">
        {dot && i === 0 && <div className="size-[5px] rounded-[1px] border border-[#5a3208] bg-[#f3a64e]" />}
      </div>
    ))}
  </div>
);

const ViewHeader = () => (
  <div className={`${BAR} h-[26px] pb-px pl-[9px]`}>
    <Hatch flip className="bottom-0 left-0" />
    <IconMenu n="cubeWhite" />
    <span className="ml-[13px] w-[45px]">View</span>
    <span className="w-[51px]">Select</span>
    <span className="w-[39px]">Add</span>
    <span className="w-[45px]">Object</span>
    <Menu text="Object Mode" icon="cube" className="w-[113px] rounded-[5px] pl-[4px]" />
    <IconMenu n="ballMix" className="ml-[5px]" />
    <IconMenu n="pivot" className="ml-[5px] rounded-r-none" />
    <Btn n="centers" className={`w-5 rounded-r-[5px] border-l-0 ${TOOL}`} />
    <Btn n="axes" className="ml-[5px] w-[19px] rounded-l-[5px] border-r-0 border-[#303030] bg-[#626262]" />
    <Btn n="arrow" className="w-[21px] border-[#1c2a44] bg-[#5680c2]" />
    <Btn n="arc" className={`w-5 border-l-0 ${DARK}`} s={15} />
    <Btn n="scaleTool" className={`w-5 border-l-0 ${DARK}`} s={15} />
    <Menu text="Global" className="w-[72px] rounded-r-[5px] border-l-0 pl-2" />
    <LayerGrid dot className="ml-[5px]" />
    <LayerGrid className="ml-[5px]" />
    <Btn n="lockLayers" className="ml-[5px] w-5 rounded-[5px] border-[#303030] bg-[#5c5c5c]" s={17} />
    <Btn n="prop" className="ml-[5px] w-5 rounded-[5px] border-[#303030] bg-[#989898]" />
    <Btn n="magnet" className={`ml-[5px] w-[19px] rounded-l-[5px] ${TOOL}`} s={15} />
    <div className={`flex h-5 w-8 items-center justify-between border-y px-1 ${DARK}`}><Icon n="increments" s={16} /><UpDown /></div>
    <Btn n="gridDot" className={`w-5 rounded-r-[5px] ${TOOL}`} />
    <Btn n="photoPlus" className={`ml-[5px] w-5 rounded-l-[5px] ${TOOL}`} s={17} />
    <Btn n="clapper" className={`w-5 rounded-r-[5px] border-l-0 ${TOOL}`} s={17} />
  </div>
);

/* ---------- node editor ---------- */

const Node = ({ title, active = false, className, children }: { title: string; active?: boolean; className: string; children: React.ReactNode }) => (
  <div className={`absolute overflow-hidden rounded-[8px] border bg-[#606060]/95 shadow-[0_3px_9px_1px_rgba(0,0,0,0.65)] ${active ? "border-[#e89a35]" : "border-[#484848]"} ${className}`}>
    <div className="flex h-[19px] items-center bg-linear-to-b from-[#595959] to-[#4f4f4f] pt-[3px] pl-[5px]">
      <svg width="10" height="10" viewBox="0 0 10 10"><path d="M0 0 H10 L5 10Z" fill={active ? "#d65f1a" : "#363636"} /></svg>
      <span className="ml-[8px] pt-[2px] leading-4">{title}</span>
    </div>
    <div className="pt-1">{children}</div>
  </div>
);

const Out = ({ t }: { t: string }) => <div className="flex h-[25px] items-center justify-end pt-[3px] pr-[22px]">{t}</div>;

const Row = ({ children }: { children: React.ReactNode }) => <div className="flex h-[25px] items-center pl-[17px]">{children}</div>;

const CheckRow = ({ t, on }: { t: string; on?: boolean }) => (
  <div className={`flex h-[25px] items-start pt-[5px] pl-3 ${on ? "text-white" : ""}`}>
    <Check on={on} /><span className="ml-2">{t}</span>
  </div>
);

const WIRES = [
  "M385 95 C405 95 405 125 425 125",
  "M625 95 C645 95 645 257 665 257",
  "M625 215.5 C645 215.5 645 277.5 665 277.5",
  "M865 95 C885 95 885 206.5 905 206.5",
];
const SOCKETS = [[385, 95], [425, 125], [625, 95], [625, 215.5], [665, 256.5], [665, 277.5], [865, 95], [905, 206.5]];
const HANDLES: [number, string, boolean][] = [[9.5, "#3a3ad8", false], [76.5, "#bdd3fb", false], [90.5, "#ececec", false], [104, "#fcc4b0", true], [171, "#dd3346", false]];

const NodeEditor = () => (
  <section className="relative h-[398px] shrink-0 overflow-hidden bg-[#393939]">
    <svg width="1438" height="380" shapeRendering="crispEdges" className="absolute inset-0">
      {range(72).map((i) => {
        const x = 4 + i * 20;
        return <rect key={i} x={x > 400 ? x + 1 : x} y="0" width="1" height="380" fill={i === 7 ? "#202020" : i % 5 === 2 ? "#2b2b2b" : "#313131"} />;
      })}
      {range(19).map((i) => (
        <rect key={i} x="0" y={19 + i * 20} width="1438" height="1" fill={i === 2 ? "#242424" : i % 5 === 2 ? "#2b2b2b" : "#313131"} />
      ))}
    </svg>
    <svg width="1438" height="380" fill="none" className="absolute inset-0">
      {WIRES.map((d, i) => (
        <g key={d}>
          <path d={d} stroke="#181818" strokeWidth="3.4" />
          <path d={d} stroke={i === 0 ? "#c8c8c8" : "#8c8c8c"} strokeWidth="1.5" />
        </g>
      ))}
    </svg>

    <Node title="vtkNetCDFCFReader" active className="top-[59px] left-[184px] h-[101px] w-[202px]">
      <Out t="output" />
      <div className="pl-px"><CheckRow t="SphericalCoordinates" /></div>
      <div className="flex h-[25px] items-center pl-[18px]">
        <span className="w-[56px] pt-[2px]">FileName</span>
        <div className={`h-5 w-[96px] rounded-l-[5px] border ${LIGHT}`} />
        <Btn n="folder" className={`w-5 rounded-r-[5px] border-l-0 ${TOOL}`} s={16} />
      </div>
    </Node>

    <Node title="vtkGeometryFilter" className="top-[59px] left-[425px] h-[81px] w-[201px]">
      <Out t="output" />
      <div className="mt-[5px] flex h-[25px] items-center pt-[2px] pl-[17px]">input</div>
    </Node>

    <Node title="ColorRamp" className="top-[179px] left-[425px] h-[161px] w-[201px]">
      <Out t="lookupTable" />
      <div className="mt-[7px] flex h-5 items-center pl-[11px]">
        <Icon n="plus" s={16} />
        <Icon n="minus" s={16} className="ml-[4px]" />
        <Icon n="flip" s={17} className="ml-[8px]" />
        <Menu text="RGB" className="ml-[13px] w-[52px] rounded-l-[5px] pl-[7px]" />
        <Menu text="Linear" className="w-[52px] rounded-r-[5px] border-l-0 pl-[7px]" />
      </div>
      <svg width="182" height="26" className="mt-1 ml-[9px] block overflow-visible">
        <defs>
          <linearGradient id="ramp">
            <stop offset="0.05" stopColor="#3736d9" /><stop offset="0.2" stopColor="#8b97e8" /><stop offset="0.42" stopColor="#c0d6fd" />
            <stop offset="0.5" stopColor="#eeeeee" /><stop offset="0.575" stopColor="#fcc9b6" /><stop offset="0.8" stopColor="#e58b80" /><stop offset="0.95" stopColor="#dc3248" />
          </linearGradient>
        </defs>
        <rect x="0.5" y="0.5" width="180" height="20" fill="url(#ramp)" stroke="#000" />
        <path d="M1 22 H181" stroke="#8a8a8a" />
        <path d="M104.5 1 V12" stroke="#111" strokeDasharray="3 2" />
        {HANDLES.map(([x, c, sel]) => (
          <g key={x} transform={`translate(${x} 0)`}>
            <path d="M0 11.5 L5 16 V23.5 H-5 V16Z" fill={sel ? "#f4f4f4" : "#6e6e6e"} stroke="#000" strokeWidth="1.2" />
            <rect x="-3.5" y="17.5" width="7" height="5" fill={c} stroke={sel ? "#888" : "#e8e8e8"} strokeWidth="0.8" />
          </g>
        ))}
      </svg>
      <div className="mt-[5px] flex gap-2 pl-[9px]">
        <Num value="3" className={`w-[51px] rounded-full ${EMBOSS}`} />
        <Num label="Pos:" value="0.575" className={`w-[121px] rounded-full ${EMBOSS}`} />
      </div>
      <div className="mt-[5px] ml-[9px] h-5 w-[180px] rounded-[5px] border border-[#303030] bg-[#fcc8b4]" />
    </Node>

    <Node title="Color Mapper" className="top-[59px] left-[665px] h-[233px] w-[201px]">
      <Out t="output" />
      <CheckRow t="Generate scalar bar" />
      <Row><span className="w-[56px] pt-[2px]">texture t</span><Menu text="IMAGE" icon="image" className="w-[116px] rounded-[5px] pl-[3px]" /></Row>
      <Row><span className="w-[56px] pt-[2px]">color by:</span><Menu text="" className="w-[116px] rounded-[5px]" /></Row>
      <CheckRow t="automatic range" on />
      <div className="mt-[2px] flex pl-[9px] opacity-50">
        <Num label="mi:" value="222.39" className="w-[90px] rounded-l-full" />
        <Num label="ma:" value="311.91" className="w-[90px] rounded-r-full border-l-0" />
      </div>
      <div className="mt-[16px] flex h-[21px] items-center pt-[2px] pl-[17px]">input</div>
      <div className="flex h-[21px] items-center pt-[2px] pl-[17px]">lookuptable</div>
    </Node>

    <Node title="ToBlender" className="top-[59px] left-[905px] h-[162px] w-[201px]">
      <Row>
        <span className="w-[56px] pt-[2px]">Name:</span>
        <div className={`w-[117px] rounded-[5px] border pl-[7px] ${FIELD} ${LIGHT}`}>earth</div>
      </Row>
      <CheckRow t="Auto update" />
      <CheckRow t="Smooth" />
      <div className={`mt-[13px] ml-[9px] w-[181px] justify-center rounded-[5px] border ${FIELD} ${TOOL}`}>update</div>
      <div className="mt-[4px] flex h-[25px] items-center pl-[17px]">input</div>
    </Node>

    <svg width="1438" height="380" className="pointer-events-none absolute inset-0">
      {SOCKETS.map(([x, y]) => <circle key={`${x}-${y}`} cx={x} cy={y} r="4.7" fill="#b85a42" stroke="#262626" strokeWidth="1" />)}
    </svg>

    <div className="absolute top-[6px] left-[1439px] h-[369px] w-[11px] rounded-full border-b border-[#222] bg-linear-to-r from-[#9a9a9a] to-[#7c7c7c]" />
    <div className="absolute top-[382px] left-[5px] h-[12px] w-[1427px] rounded-full border-b border-[#222] bg-linear-to-b from-[#9a9a9a] to-[#7c7c7c]" />
    <PlusTab className="top-[22px] left-0 w-[13px] rounded-r-[4px]" />
    <PlusTab className="top-[22px] right-0 w-[15px] rounded-l-[4px]" />
    <Hatch className="top-0 right-0" />
  </section>
);

const NodeHeader = () => (
  <div className={`${BAR} h-[26px] pt-px pl-2`}>
    <IconMenu n="nodeEditor" />
    <span className="ml-[13px] w-[45px]">View</span>
    <span className="w-[51px]">Select</span>
    <span className="w-[39px]">Add</span>
    <span className="w-[38px]">Node</span>
    <Btn n="layers" className={`w-5 rounded-l-[5px] ${DARK}`} />
    <Btn n="checker" className={`w-5 border-l-0 ${DARK}`} />
    <Btn n="ballDark" className={`w-5 border-l-0 ${DARK}`} />
    <Btn n="ballRed" className="w-5 rounded-r-[5px] border-l-0 border-[#1c2a44] bg-[#5680c2]" />
    <IconMenu n="ballRed" className="ml-[5px] rounded-r-none" />
    <div className={`w-[119px] border-y pl-[7px] ${FIELD} ${LIGHT}`}>NodeTree</div>
    <div className={`w-5 justify-center border border-r-0 ${FIELD} ${TOOL}`}>F</div>
    <Btn n="plus" className={`w-5 border-r-0 ${TOOL}`} />
    <Btn n="cross" className={`w-5 rounded-r-[5px] ${TOOL}`} s={15} />
    <Btn n="pin" className={`ml-[6px] w-5 rounded-[5px] ${TOOL}`} s={15} />
    <Btn n="parent" className="ml-[5px] w-5 rounded-[5px] border-[#585858] bg-[#858585]" s={15} />
    <Btn n="backdrop" className={`ml-[16px] w-5 rounded-[5px] ${DARK}`} s={17} />
    <Btn n="magnet" className={`ml-[5px] w-5 rounded-l-[5px] ${TOOL}`} s={15} />
    <div className={`flex h-5 w-8 items-center justify-between rounded-r-[5px] border border-l-0 px-1 ${DARK}`}><Icon n="gridDot" s={16} /><UpDown /></div>
    <Btn n="copyNodes" className={`ml-[5px] w-5 rounded-l-[5px] ${TOOL}`} s={17} />
    <Btn n="pasteNodes" className={`w-5 rounded-r-[5px] border-l-0 ${TOOL}`} s={17} />
  </div>
);

/* ---------- outliner ---------- */

const Toggle = ({ open = false }: { open?: boolean }) => (
  <svg width="9" height="9" viewBox="0 0 9 9" className="shrink-0">
    <circle cx="4.5" cy="4.5" r="3.8" fill="#f0f0f0" stroke="#222" strokeWidth="1" />
    <path d={open ? "M2.2 4.5 H6.8" : "M2.2 4.5 H6.8 M4.5 2.2 V6.8"} stroke="#111" strokeWidth="1.3" />
  </svg>
);

const Cols = ({ on = false }: { on?: boolean }) => (
  <div className="flex h-full shrink-0">
    {["eye", "cursor", "photo"].map((n) => (
      <div key={n} className="flex w-5 shrink-0 items-center justify-center border-l border-[#5a5a5a]">{on && <Icon n={n} s={16} />}</div>
    ))}
  </div>
);

const CELL = "flex h-full w-[164px] shrink-0 items-center overflow-hidden";

const Outliner = () => (
  <section className="relative flex h-[158px] shrink-0 flex-col overflow-hidden bg-[#727272]">
    <div className={`${BAR} h-[26px] overflow-hidden pb-px pl-[9px]`}>
      <IconMenu n="outliner" />
      <span className="ml-[12px] w-[45px]">View</span>
      <span className="w-[47px]">Search</span>
      <Menu text="All Scenes" className="w-[110px] rounded-[5px] pl-[7px]" />
    </div>
    <div className="relative h-[114px] pt-px">
      <div className="absolute top-[20px] left-[30px] h-[70px] w-px bg-[#333]" />
      <div className="flex h-5 items-center bg-[#727272]">
        <div className={`bg-[#7c8489] pl-[6px] ${CELL}`}>
          <Toggle open /><div className="h-px w-[7px] bg-[#333]" />
          <span className="flex size-[18px] items-center justify-center rounded-full bg-[#b0b4b8]"><Icon n="scene" s={16} /></span>
          <span className="ml-[3px] pt-[2px]">Scene</span>
        </div>
        <Cols />
      </div>
      <div className="flex h-5 items-center bg-[#6b6b6b]">
        <div className={`pl-[26px] ${CELL}`}>
          <Toggle /><Icon n="layers" s={16} className="ml-[8px]" /><span className="ml-1 w-[78px] shrink-0 pt-[2px]">RenderLayers</span>
          <div className="h-[11px] w-[2px] shrink-0 bg-[#444]" /><Icon n="layers" s={16} className="ml-[10px]" />
        </div>
        <Cols />
      </div>
      <div className="flex h-5 items-center bg-[#727272]">
        <div className={`pl-[41px] ${CELL}`}>
          <span className="flex size-[18px] items-center justify-center rounded-full bg-[#a5a5ad]"><Icon n="globe" s={16} /></span>
          <span className="ml-1 pt-[2px]">World</span>
        </div>
        <Cols />
      </div>
      <div className="flex h-5 items-center bg-[#6b6b6b]">
        <div className={`pl-[26px] ${CELL}`}>
          <Toggle /><div className="mr-[1px] h-px w-[7px] bg-[#333]" /><Icon n="camOrange" s={16} /><span className="ml-1 w-[49px] pt-[2px] text-white">Camera</span>
          <div className="h-[11px] w-[2px] bg-[#444]" />
          <span className="ml-[9px] flex size-[18px] items-center justify-center rounded-full bg-[#9a9a9a]"><Icon n="camGrey" s={15} /></span>
        </div>
        <Cols on />
      </div>
      <div className="flex h-5 items-center bg-[#727272]">
        <div className={`pl-[26px] ${CELL}`}>
          <Toggle /><div className="mr-[1px] h-px w-[7px] bg-[#333]" /><Icon n="mesh" s={16} /><span className="ml-1 w-[36px] pt-[2px]">earth</span>
          <div className="h-[11px] w-[2px] bg-[#444]" /><Icon n="meshGrey" s={16} className="ml-[10px]" />
        </div>
        <Cols on />
      </div>
      <div className="flex h-[12px]"><div className="w-[164px] shrink-0" /><Cols /></div>
    </div>
    <div className="mt-[2px] ml-[5px] h-[12px] w-[215px] rounded-full border border-[#444] bg-[#595959]">
      <div className="h-[10px] w-[158px] rounded-full bg-linear-to-b from-[#9a9a9a] to-[#808080]" />
    </div>
    <Hatch className="top-0 right-0" />
    <Hatch flip className="bottom-0 left-0" />
  </section>
);

/* ---------- properties ---------- */

const Panel = ({ title, open = true, check = false, className = "", children }: { title: string; open?: boolean; check?: boolean; className?: string; children?: React.ReactNode }) => (
  <section className={`mr-[3px] ml-[5px] shrink-0 border-t border-[#404040] ${className}`}>
    <div className="flex h-[25px] items-center border-t border-[#8a8a8a] pl-2 text-[12px]">
      <svg width="9" height="9" viewBox="0 0 9 9"><path d={open ? "M0.2 0.5 H8.8 L4.5 8.5Z" : "M0.8 0.2 V8.8 L8.8 4.5Z"} fill="#262626" /></svg>
      {check && <span className="ml-[3px] flex"><Check /></span>}
      <span className={check ? "ml-[6px] tracking-[0.04px]" : "ml-[3px] tracking-[0.04px]"}>{title}</span>
      <svg width="12" height="6" className="mr-[5px] ml-auto">
        {range(8).map((i) => (
          <g key={i}>
            <rect x={(i % 4) * 3} y={Math.floor(i / 4) * 3} width="1" height="1" fill="#2e2e2e" />
            <rect x={(i % 4) * 3 + 1} y={Math.floor(i / 4) * 3 + 1} width="1" height="1" fill="#c0c0c0" />
          </g>
        ))}
      </svg>
    </div>
    {children && <div className="pl-[3px]">{children}</div>}
  </section>
);

const TABS = ["photo", "layers", "scene", "globe", "cube", "link", "camDark", "checker", "wrench"];
const TWO = "grid w-[208px] grid-cols-2 gap-x-2";

const Properties = () => (
  <section className="relative flex flex-1 flex-col overflow-hidden bg-[#727272]">
    <div className={`${BAR} h-[26px] overflow-hidden pb-px pl-[9px]`}>
      <IconMenu n="props" />
      <div className="ml-2 flex">
        {TABS.map((n, i) => (
          <div key={n} className={`flex h-5 shrink-0 items-center justify-center border-y border-r ${i === 0 ? "w-[19px] rounded-l-[5px] border-l" : "w-5"} ${n === "camDark" ? "border-[#222] bg-[#5680c2]" : DARK}`}>
            <Icon n={n} s={16} className={n === "camDark" ? "" : "opacity-70"} />
          </div>
        ))}
      </div>
    </div>
    <div className="flex h-[36px] shrink-0 items-center overflow-hidden pl-[9px] whitespace-nowrap">
      <Icon n="pin" s={16} />
      <Icon n="scene" s={16} className="ml-[5px]" />
      <svg width="4" height="7" className="ml-[6px] shrink-0"><path d="M0 0 V7 L4 3.5Z" fill="#333" /></svg>
      <Icon n="cube" s={16} className="ml-[15px]" />
      <span className="ml-[6px] w-[34px] shrink-0 pt-[2px]">Came</span>
      <svg width="4" height="7" className="shrink-0"><path d="M0 0 V7 L4 3.5Z" fill="#333" /></svg>
      <Icon n="camDark" s={16} className="ml-[14px]" />
      <span className="ml-[6px] pt-[2px]">Camera.0</span>
    </div>
    <div className="flex h-[35px] shrink-0 pt-2 pl-2">
      <IconMenu n="camDark" className="rounded-r-none" />
      <div className={`w-[77px] border-y pl-[7px] ${FIELD} ${LIGHT}`}>Camera.001</div>
      <div className={`w-[21px] justify-center rounded-r-[5px] border ${FIELD} ${TOOL}`}>F</div>
    </div>

    <Panel title="Lens" className="h-[150px]">
      <div className={`mt-[7px] flex h-5 w-[208px] text-white ${EMBOSS}`}>
        <div className={`w-[68px] justify-center rounded-l-[5px] border border-[#1c2a44] bg-[#5680c2] text-black ${FIELD}`}>Perspective</div>
        <div className={`w-[69px] justify-center border-y ${FIELD} ${DARK}`}>Orthographic</div>
        <div className={`w-[71px] justify-center rounded-r-[5px] border ${FIELD} ${DARK}`}>Panoramic</div>
      </div>
      <div className={`mt-[5px] ${TWO}`}>
        <Num label="Focal :" value="35.00" className={`rounded-full ${EMBOSS}`} />
        <Menu text="Millimeters" className="rounded-[5px] pl-[7px]" />
        <span className="mt-[8px] flex h-[17px] items-center pl-[7px]">Shift:</span>
        <span className="mt-[8px] flex h-[17px] items-center pl-[7px]">Clipping:</span>
        <Num label="X:" value="0.000" className="rounded-t-[10px]" />
        <Num label="Start:" value="0.100" className="rounded-t-[10px]" />
        <Num label="Y:" value="0.000" className={`rounded-b-[10px] border-t-0 ${EMBOSS}`} />
        <Num label="End:" value="100.000" className={`rounded-b-[10px] border-t-0 ${EMBOSS}`} />
      </div>
    </Panel>

    <Panel title="Camera" className="h-[110px]">
      <div className="mt-[7px] flex">
        <Menu text="Camera Presets" className="w-[168px] rounded-l-[5px] pl-[6px]" />
        <Btn n="plus" className={`w-5 border-l-0 ${TOOL}`} />
        <Btn n="minus" className={`w-5 rounded-r-[5px] border-l-0 ${TOOL}`} />
      </div>
      <div className={TWO}>
        <span className="mt-[8px] mb-[5px] flex h-[17px] items-center pl-[7px]">Sensor:</span>
        <span />
        <Num label="Size:" value="32.00" className={`rounded-full ${EMBOSS}`} />
        <Menu text="Auto" className="rounded-[5px] pl-[7px]" />
      </div>
    </Panel>

    <Panel title="Depth of Field" className="h-[104px]">
      <div className={`mt-[8px] ${TWO}`}>
        <div>
          <span className="flex h-5 items-center pt-px pl-[7px]">Focus:</span>
          <div className={`flex h-5 items-center justify-between rounded-[5px] border px-1 ${LIGHT}`}><Icon n="cube" s={16} /><Icon n="dropper" s={16} /></div>
          <Num label="Distanc:" value="0.00" className={`mt-[2px] rounded-full ${EMBOSS}`} />
        </div>
        <div>
          <span className="flex h-5 items-center pt-px pl-[7px]">Viewport:</span>
          <span className="flex h-[18px] items-start pt-px pl-[3px]"><Check /><span className="ml-2">High Quality</span></span>
          <Num label="F-stop:" value="128.0" className={`rounded-full ${EMBOSS}`} />
        </div>
      </div>
    </Panel>

    <Panel title="Display" className="h-[142px]">
      <div className={`mt-[7px] ${TWO}`}>
        <div className="-mt-px">
          {["Limits", "Mist", "Sensor", "Name"].map((t) => (
            <span key={t} className="flex h-[22px] items-start pt-[4px] pl-[3px]"><Check /><span className="ml-[7px]">{t}</span></span>
          ))}
        </div>
        <div>
          <Menu text="Composition …" className="rounded-[5px] pl-[7px]" />
          <Num label="Size:" value="1.00" className={`mt-[10px] rounded-full ${EMBOSS}`} />
          <span className="mt-[10px] flex h-[22px] items-start pt-[3px] pl-[3px] text-white"><Check on /><span className="ml-2">Passepartout</span></span>
          <div className={`justify-between rounded-full border border-[#303030] bg-linear-to-r from-[#828282] from-54% to-[#acacac] to-54% pr-[14px] pl-[14px] ${FIELD}`}><span>Alpha:</span><span>0.500</span></div>
        </div>
      </div>
    </Panel>

    <Panel title="Safe Areas" open={false} check className="h-[24px]" />
    <Panel title="Custom Properties" open={false} />
    <Hatch className="top-0 right-0" />
    <Hatch flip className="bottom-0 left-0" />
  </section>
);

export default function App() {
  return (
    <div className="flex h-[948px] w-[1678px] flex-col overflow-hidden bg-[#4a4a4a] font-['DejaVu_Sans_Condensed','DejaVu_Sans',sans-serif] text-[11px] leading-4 text-black">
      <InfoBar />
      <div className="flex h-[921px] shrink-0 border-t border-black">
        <main className="flex w-[1455px] shrink-0 flex-col">
          <Viewport />
          <ViewHeader />
          <div className="h-px shrink-0 bg-black" />
          <NodeEditor />
          <NodeHeader />
        </main>
        <aside className="flex h-[920px] w-[223px] shrink-0 flex-col border-l border-black">
          <Outliner />
          <div className="h-px shrink-0 bg-black" />
          <Properties />
        </aside>
      </div>
    </div>
  );
}
